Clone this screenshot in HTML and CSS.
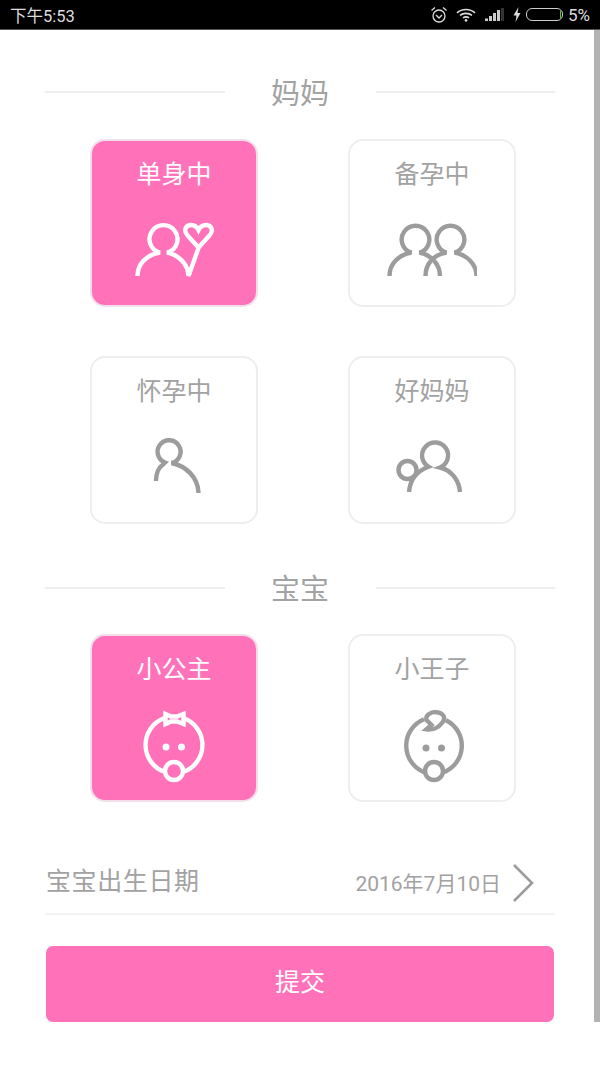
FILE: index.html
```html
<!DOCTYPE html>
<html lang="zh">
<head>
    <meta charset="UTF-8">
    <meta name="viewport" content="width=device-width, initial-scale=1.0">
    <link rel="stylesheet" href="styles.css">
</head>
<body>
    <div class="status">
        <span class="time">下午5:53</span>
        <div class="status-icons">
            <svg width="18" height="18" viewBox="0 0 18 18" class="ico-alarm">
                <circle cx="9" cy="10" r="6"/>
                <path d="M6 9 L9 12 L12 9"/>
                <path d="M1.5 4.5 L5 1.5 M16.5 4.5 L13 1.5"/>
            </svg>
            <svg width="20" height="14" viewBox="0 0 20 14" class="ico-wifi">
                <path d="M1 4.8 C6 0.4 14 0.4 19 4.8"/>
                <path d="M4 7.4 C7.2 4.8 12.8 4.8 16 7.4"/>
                <path d="M7 9.9 C8.6 8.8 11.4 8.8 13 9.9"/>
                <circle cx="10" cy="12.4" r="1.3" class="dot"/>
            </svg>
            <svg width="20" height="13" viewBox="0 0 20 13" class="ico-signal">
                <rect x="0" y="10.5" width="3" height="2.5"/>
                <rect x="4" y="8" width="3" height="5"/>
                <rect x="8" y="5" width="3" height="8"/>
                <rect x="12" y="2" width="3" height="11"/>
                <rect x="16" y="0" width="3" height="13" class="off"/>
            </svg>
            <svg width="8" height="15" viewBox="0 0 8 15" class="ico-bolt">
                <path d="M5.5 0 L0.5 8.5 H3.5 L2.5 15 L7.5 6 H4.5 Z"/>
            </svg>
            <div class="battery"><span></span></div>
            <span class="percent">5%</span>
        </div>
    </div>

    <div class="scroll-thumb"></div>

    <div class="container">
        <div class="section-head">
            <span class="line"></span>
            <h2>妈妈</h2>
            <span class="line"></span>
        </div>
        <div class="cards">
            <div class="card active">
                <p>单身中</p>
                <svg class="icon" width="90" height="80" viewBox="129 215 90 80">
                    <path d="M137.5 276 C137.5 264 146 255 160 252.7 A14 14 0 1 1 167 252.7 C179 255 188 264 188.5 276 L198.5 248"/>
                    <path d="M198.5 247.5 L188 236 C182 229 187 225 191 225 C195 225 197 227 198.5 230 C200 227 202 225 206 225 C210 225 215 229 209 236 Z"/>
                </svg>
            </div>
            <div class="card">
                <p>备孕中</p>
                <svg class="icon" width="90" height="80" viewBox="387 215 90 80">
                    <path d="M389.5 276 C389.5 264 398 255 411.5 252.7 A13.8 13.8 0 1 1 419.5 252.7 C431 255 440 264 440 276"/>
                    <path d="M425.5 276 C425.5 264 433 255 446.5 252.7 A13.8 13.8 0 1 1 454.5 252.7 C467 255 476.5 264 476.5 276"/>
                </svg>
            </div>
            <div class="card">
                <p>怀孕中</p>
                <svg class="icon" width="90" height="80" viewBox="129 432 90 80">
                    <path d="M156 481 C156 474 158 468 163 464.5 L165 462.5 A11.5 11.5 0 1 1 171.5 463 C186 466 198 477 198.5 493"/>
                </svg>
            </div>
            <div class="card">
                <p>好妈妈</p>
                <svg class="icon" width="90" height="80" viewBox="387 432 90 80">
                    <path d="M409 492 C410 480 417 471 428.5 466.7 A13 13 0 1 1 440 467.5 C451 470 459 480 460 492"/>
                    <circle cx="407.5" cy="470" r="9"/>
                </svg>
            </div>
        </div>

        <div class="section-head second">
            <span class="line"></span>
            <h2>宝宝</h2>
            <span class="line"></span>
        </div>
        <div class="cards">
            <div class="card active">
                <p>小公主</p>
                <svg class="icon" width="90" height="80" viewBox="129 710 90 80">
                    <path d="M165 772 A28.5 28.5 0 0 1 164 718.3 M184 718.3 A28.5 28.5 0 0 1 183 772"/>
                    <path d="M165.5 714 L171 716.5 H177 L183.5 714 V724 L177 721.5 H171 L165.5 724 Z"/>
                    <circle cx="174" cy="771" r="9"/>
                    <circle cx="166" cy="747" r="3.5" class="dot"/>
                    <circle cx="181.5" cy="747" r="3.5" class="dot"/>
                </svg>
            </div>
            <div class="card">
                <p>小王子</p>
                <svg class="icon" width="90" height="80" viewBox="387 710 90 80">
                    <path d="M425 772.5 A28.5 28.5 0 0 1 424 719.3 M446 720.2 A28.5 28.5 0 0 1 443 772.5"/>
                    <path d="M426.5 720 C425 715 431.5 711.5 436.5 712.3 C443.3 712.7 446.7 718.3 441.7 723.3 C438.3 728.3 431.7 730 426.5 729.3 L431.5 725 Z"/>
                    <circle cx="434" cy="771" r="9"/>
                    <circle cx="426" cy="748" r="3.5" class="dot"/>
                    <circle cx="441.5" cy="748" r="3.5" class="dot"/>
                </svg>
            </div>
        </div>

        <div class="date-row">
            <span class="date-label">宝宝出生日期</span>
            <div class="date-value">
                <span class="date-text">2016年7月10日</span>
                <svg width="24" height="40" viewBox="0 0 24 40">
                    <path d="M2 2 L20 20 L2 38"/>
                </svg>
            </div>
        </div>

        <div class="submit">提交</div>
    </div>
</body>
</html>
```

FILE: styles.css
```css
body {
    margin: 0;
    padding: 0;
    height: 1067px;
    overflow: hidden;
    background-color: #fff;
    color: #a2a2a2;
    font-family: Roboto, "Noto Sans CJK SC", sans-serif;
    position: relative;
}

.status {
    height: 30px;
    box-sizing: border-box;
    background-color: #000;
    border-bottom: 1px solid #555;
    padding: 0 10px 0 10px;
    display: flex;
    align-items: center;
    justify-content: space-between;
    color: #ddd;
}
.time {
    font-size: 16.5px;
}
.status-icons {
    display: flex;
    align-items: center;
}
.status-icons svg {
    fill: none;
    stroke: #ddd;
    stroke-width: 1.3;
}
.status-icons .dot {
    fill: #ddd;
    stroke: none;
}
.ico-alarm {
    margin-right: 8px;
}
.ico-wifi {
    margin-right: 9px;
    stroke-width: 1.7 !important;
}
.ico-signal {
    margin-right: 8px;
}
.status-icons .ico-signal {
    fill: #ccc;
    stroke: none;
}
.ico-signal .off {
    fill: #333;
}
.status-icons .ico-bolt {
    fill: #ddd;
    stroke: none;
    margin-right: 5px;
}
.battery {
    width: 37px;
    height: 13px;
    box-sizing: border-box;
    border: 1px solid #ccc;
    border-radius: 6px;
    margin-right: 5px;
    position: relative;
}
.battery span {
    position: absolute;
    right: 1px;
    top: 2px;
    width: 1px;
    height: 7px;
    background-color: #5fc52e;
}
.percent {
    font-size: 17px;
}

.scroll-thumb {
    position: absolute;
    top: 30px;
    right: 0;
    width: 6px;
    height: 992px;
    background-color: #b3b3b3;
}

.container {
    padding: 32px 45px 0;
}

.section-head {
    display: flex;
    align-items: center;
    height: 60px;
}
.section-head.second {
    margin-top: 34px;
}
.section-head h2 {
    margin: -2px 0 0;
    width: 151px;
    text-align: center;
    font-size: 29px;
    font-weight: 400;
    color: #a2a2a2;
}
.line {
    flex: 1;
    height: 2px;
    background-color: #eee;
}

.cards {
    display: grid;
    grid-template-columns: 168px 168px;
    column-gap: 90px;
    row-gap: 49px;
    padding-left: 45px;
    margin-top: 17px;
}
.section-head.second + .cards {
    margin-top: 16px;
}
.card {
    height: 168px;
    box-sizing: border-box;
    border: 2px solid #eee;
    border-radius: 15px;
    display: flex;
    flex-direction: column;
    align-items: center;
}
.card p {
    margin: 17px 0 0;
    height: 34px;
    line-height: 34px;
    font-size: 25px;
}
.icon {
    margin-top: 23px;
    flex: none;
    fill: none;
    stroke: #9c9c9c;
    stroke-width: 4.4;
}
.icon .dot {
    fill: #9c9c9c;
    stroke: none;
}
.card.active {
    background-color: #ff72ba;
    border-color: #f3dfe9;
    color: #fff;
}
.card.active .icon {
    stroke: #fff;
}
.card.active .icon .dot {
    fill: #fff;
}

.date-row {
    margin-top: 46px;
    height: 67px;
    box-sizing: border-box;
    border-bottom: 2px solid #f2f2f2;
    display: flex;
    align-items: center;
    justify-content: space-between;
    padding-left: 1px;
}
.date-label {
    margin-top: -3px;
    font-size: 25px;
    letter-spacing: 0.6px;
}
.date-value {
    display: flex;
    align-items: center;
    font-size: 21px;
}
.date-text {
    margin-top: 2px;
}
.date-value svg {
    margin-top: 5px;
    margin-left: 11px;
    margin-right: 19px;
    fill: none;
    stroke: #9c9c9c;
    stroke-width: 2.6;
}

.submit {
    margin: 31px 1px 0;
    height: 76px;
    line-height: 74px;
    border-radius: 7px;
    background-color: #ff72ba;
    color: #fff;
    font-size: 25px;
    text-align: center;
}
```
